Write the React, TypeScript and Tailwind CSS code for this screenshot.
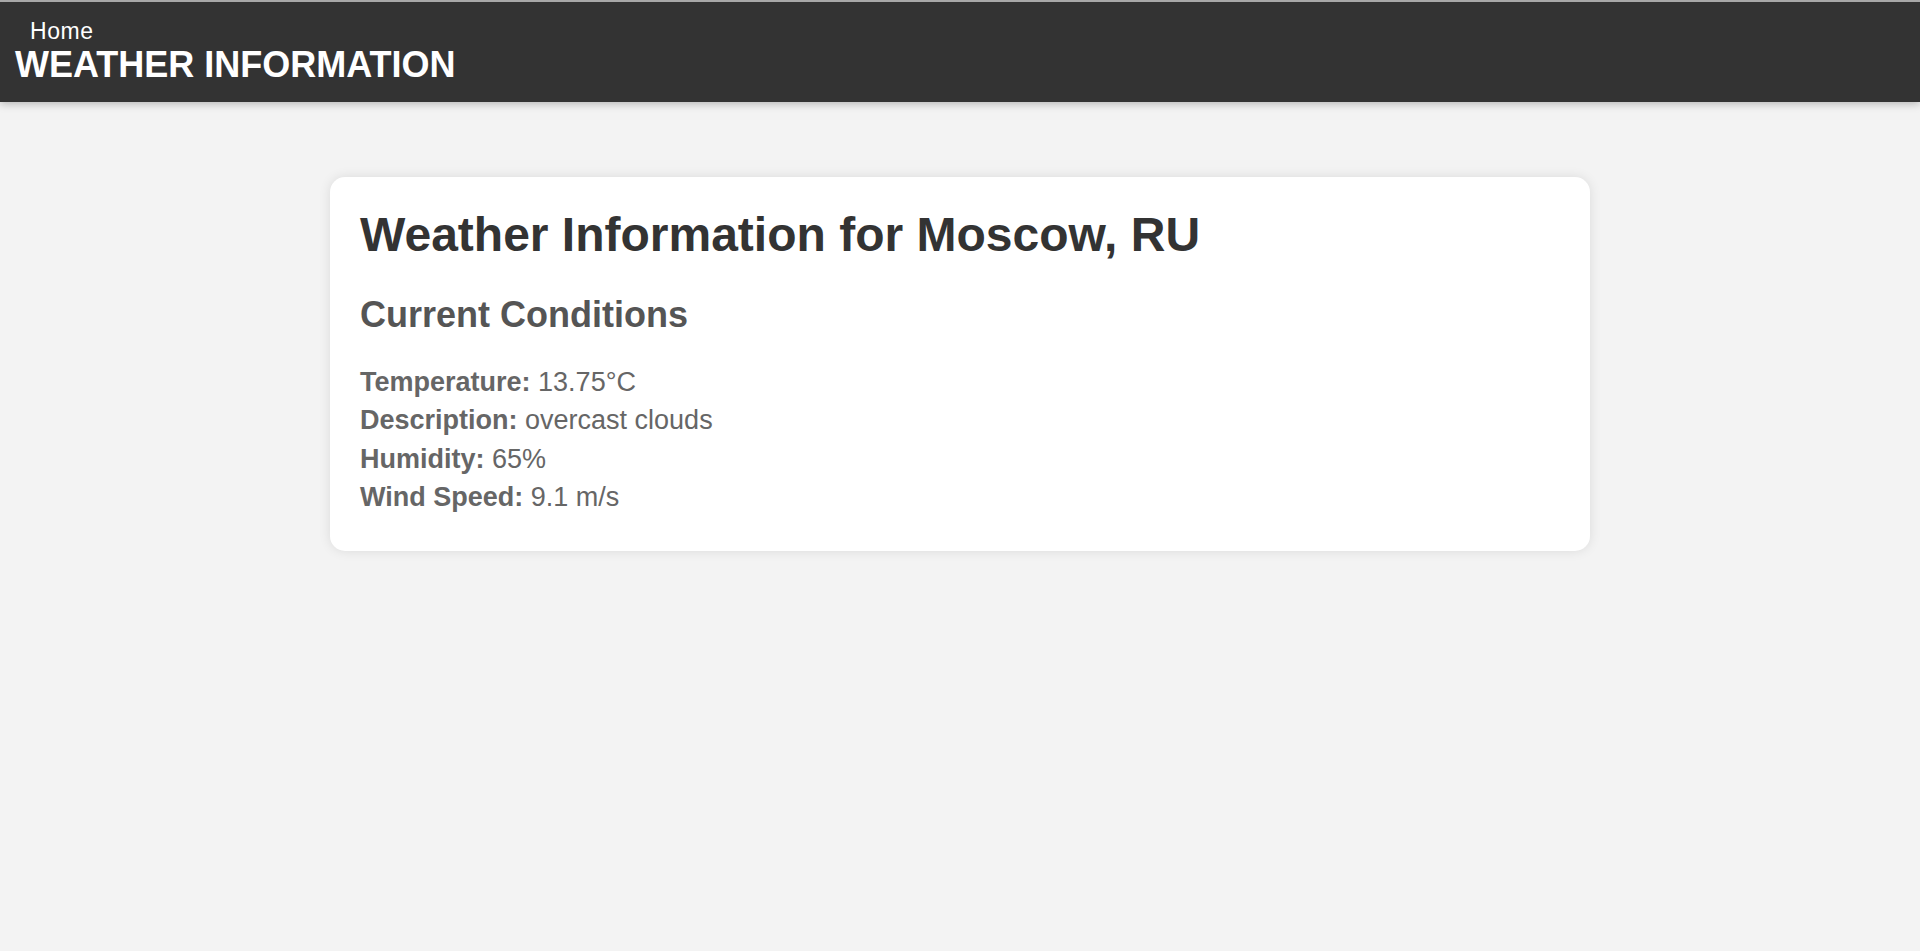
const conditions = [
  { label: 'Temperature', value: '13.75°C' },
  { label: 'Description', value: 'overcast clouds' },
  { label: 'Humidity', value: '65%' },
  { label: 'Wind Speed', value: '9.1 m/s' },
]

export default function App() {
  return (
    <div
      className="min-h-[951px] bg-[#f3f3f3]"
      style={{ fontFamily: '"Liberation Sans", Arial, sans-serif' }}
    >
      <header className="relative border-t-2 border-[#a8a8a8] bg-[#333333] px-[15px] pt-[17px] pb-[17px] text-white shadow-[0_2px_8px_rgba(0,0,0,0.25)]">
        <nav className="pl-[15px] text-[23px] leading-[24px] tracking-[0.6px]">
          <a href="#">Home</a>
        </nav>
        <h1 className="mt-[2px] text-[36px] leading-[40px] font-bold">WEATHER INFORMATION</h1>
      </header>

      <main className="flex justify-center pt-[75px]">
        <section className="w-[1260px] rounded-[15px] bg-white px-[30px] pt-[30px] pb-[34px] shadow-[0_0_12px_rgba(0,0,0,0.1)]">
          <h2 className="text-[48px] leading-[56px] font-bold text-[#333333]">
            Weather Information for Moscow, RU
          </h2>
          <h3 className="mt-[31px] text-[36px] leading-[42px] font-bold text-[#555555]">
            Current Conditions
          </h3>
          {/* the four reading lines, label bold and value plain */}
          <div className="mt-[26.5px] text-[27px] leading-[38.5px] text-[#666666]">
            {conditions.map((c) => (
              <p key={c.label}>
                <strong className="font-bold">{c.label}:</strong> {c.value}
              </p>
            ))}
          </div>
        </section>
      </main>
    </div>
  )
}
